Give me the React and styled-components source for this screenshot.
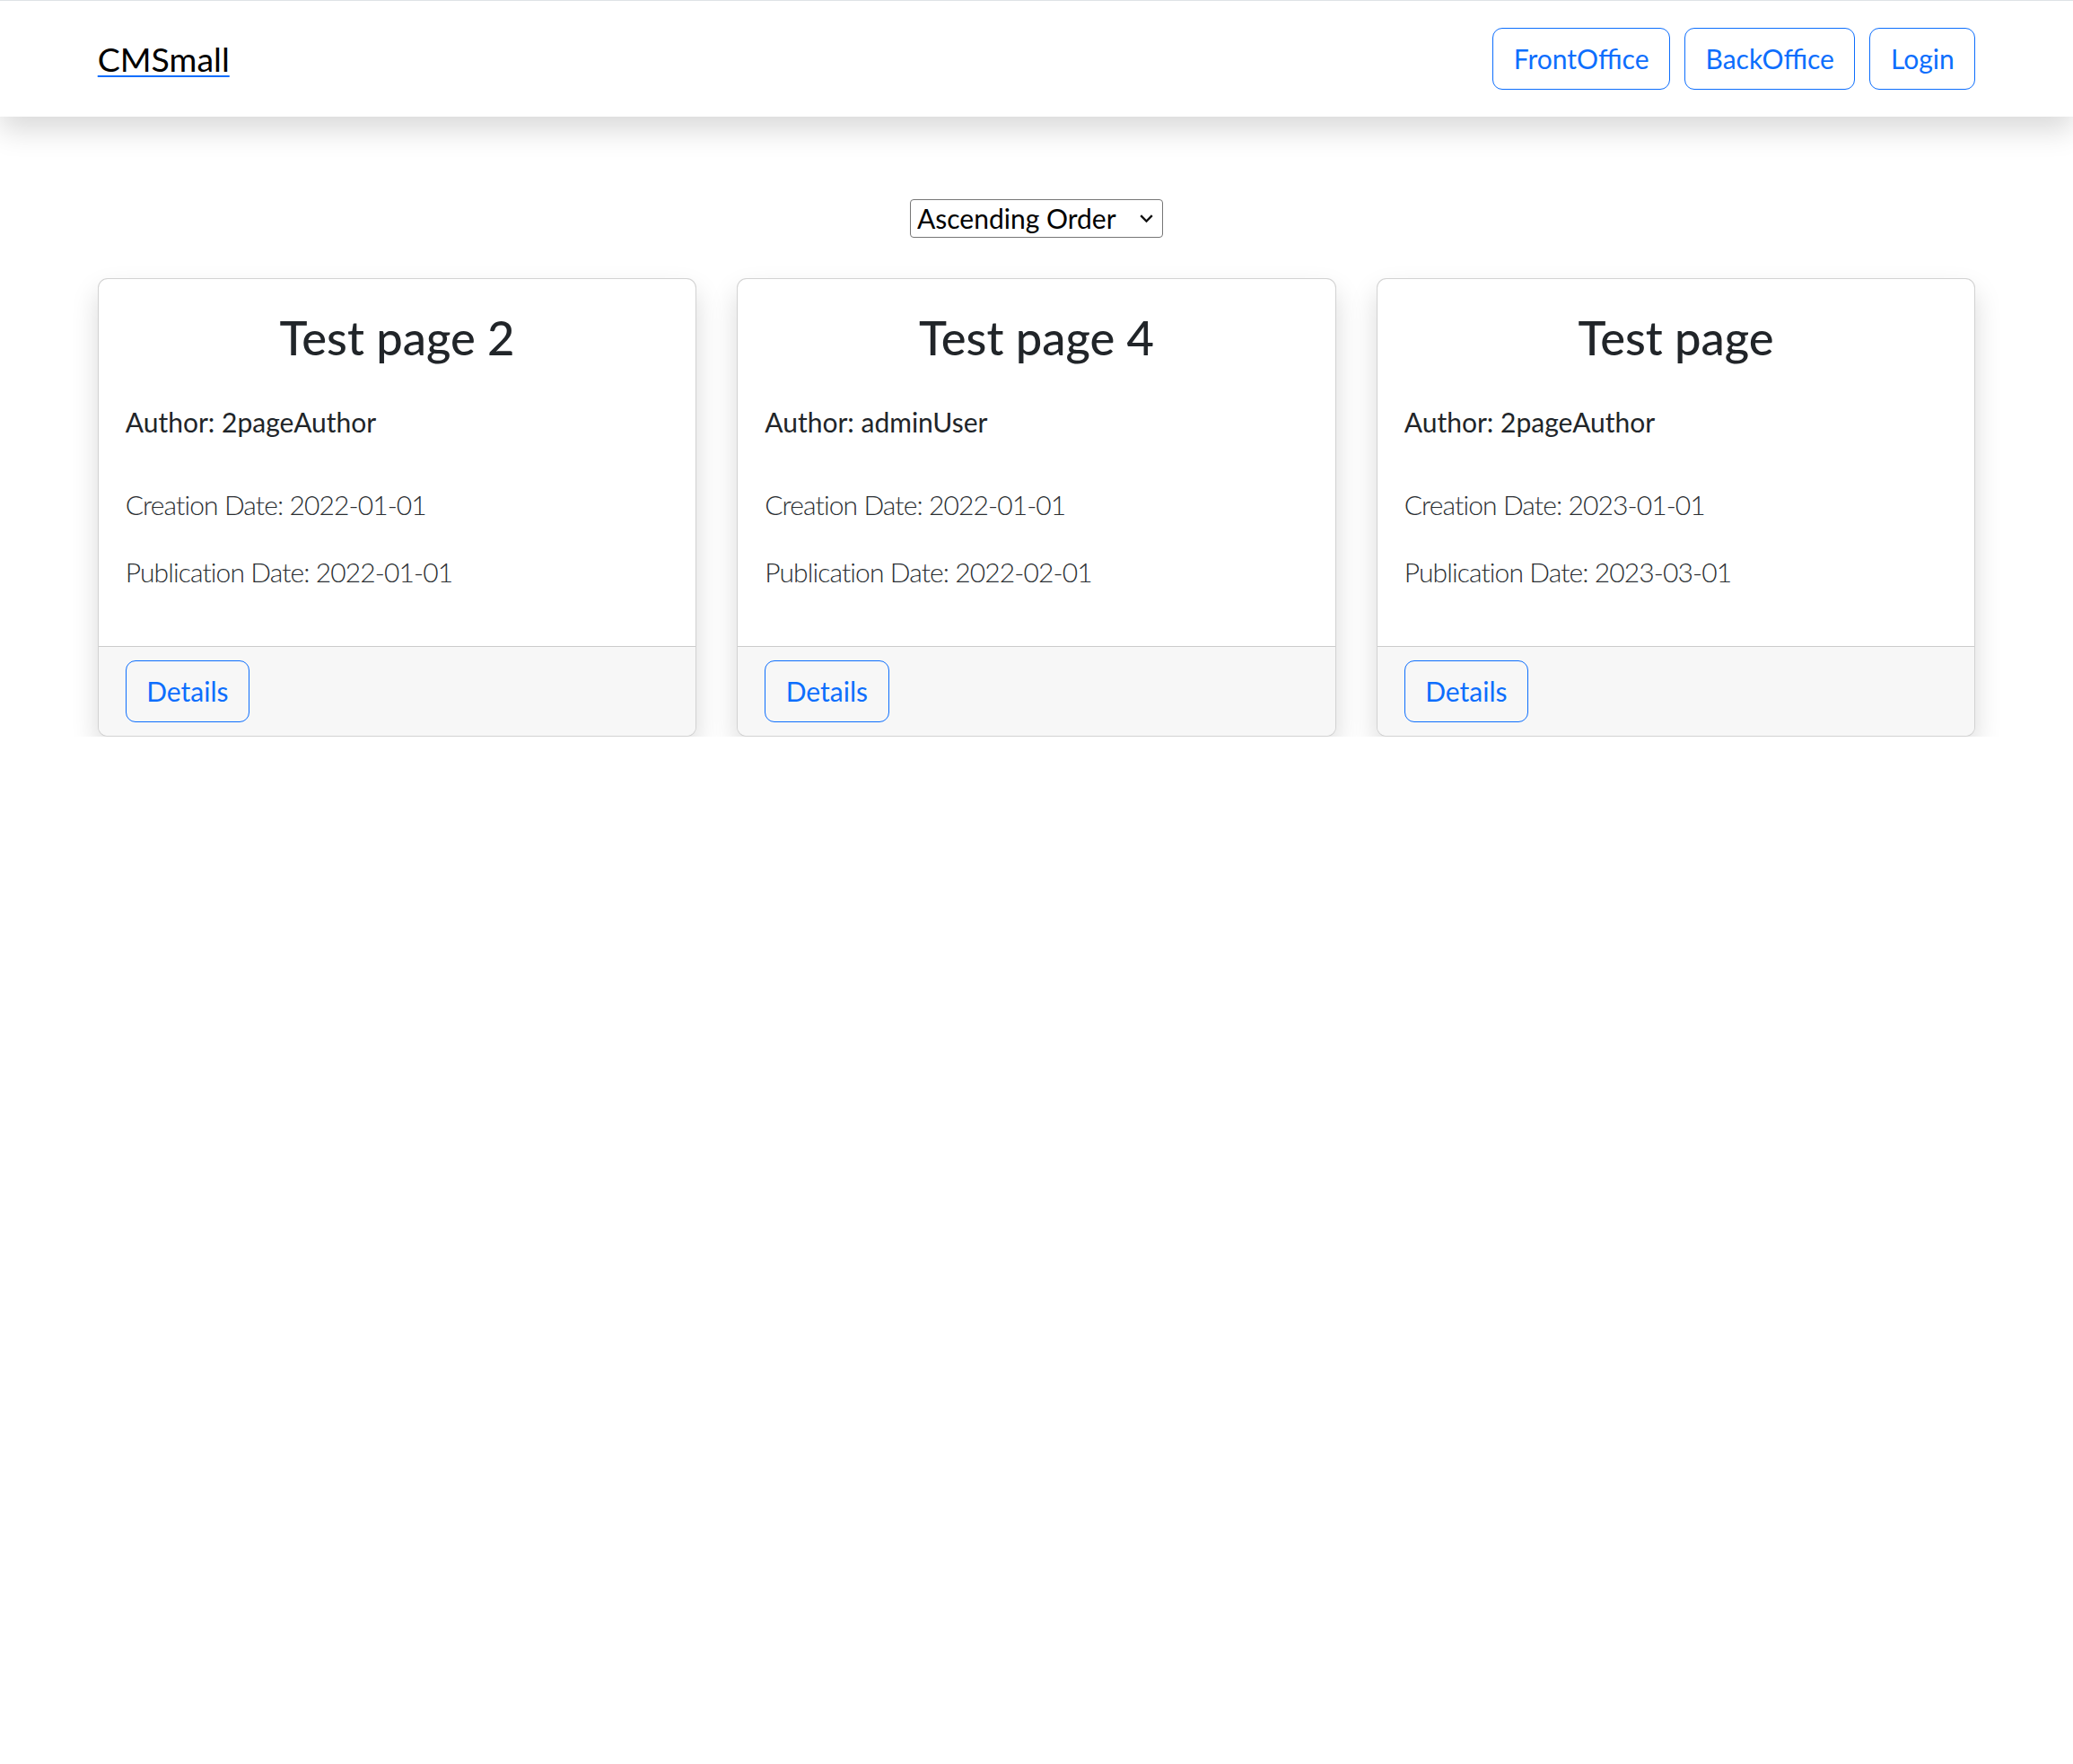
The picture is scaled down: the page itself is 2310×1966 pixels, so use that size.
import React, { useState } from "react";
import styled, { createGlobalStyle } from "styled-components";

const pages = [
  { id: 2, title: "Test page 2", author: "2pageAuthor", created: "2022-01-01", published: "2022-01-01" },
  { id: 4, title: "Test page 4", author: "adminUser", created: "2022-01-01", published: "2022-02-01" },
  { id: 1, title: "Test page", author: "2pageAuthor", created: "2023-01-01", published: "2023-03-01" },
];

function App() {
  const [order, setOrder] = useState("asc");

  return (
    <>
      <GlobalStyle />
      <Navbar>
        <Container>
          <Brand href="#">CMSmall</Brand>
          <NavButtons>
            <OutlineButton>FrontOffice</OutlineButton>
            <OutlineButton>BackOffice</OutlineButton>
            <OutlineButton>Login</OutlineButton>
          </NavButtons>
        </Container>
      </Navbar>

      <Main>
        <SortRow>
          <SelectWrap>
            <OrderSelect value={order} onChange={(e) => setOrder(e.target.value)}>
              <option value="asc">Ascending Order</option>
              <option value="desc">Descending Order</option>
            </OrderSelect>
            <Chevron width="15" height="9" viewBox="0 0 15 9">
              <path d="M1.2 1.2l6.3 6.3 6.3-6.3" fill="none" stroke="#111" strokeWidth="2.4" />
            </Chevron>
          </SelectWrap>
        </SortRow>

        <CardGrid>
          {pages.map((page) => (
            <Card key={page.id}>
              <CardBody>
                <CardTitle>{page.title}</CardTitle>
                <Author>Author: {page.author}</Author>
                <DateLine $first>Creation Date: {page.created}</DateLine>
                <DateLine>Publication Date: {page.published}</DateLine>
              </CardBody>
              <CardFooter>
                <OutlineButton>Details</OutlineButton>
              </CardFooter>
            </Card>
          ))}
        </CardGrid>
      </Main>
    </>
  );
}

export default App;

const GlobalStyle = createGlobalStyle`
  * {
    box-sizing: border-box;
  }
  body {
    margin: 0;
    background: #fff;
    color: #212529;
    font-family: "Lato", "Liberation Sans", sans-serif;
    font-size: 30px;
    line-height: 45px;
  }
`;

const Navbar = styled.nav`
  position: relative;
  z-index: 2;
  border-top: 1px solid #dee2e6;
  background: #fff;
  padding: 30px 0;
  box-shadow: 0 15px 30px rgba(0, 0, 0, 0.15);
`;

const Container = styled.div`
  max-width: 2137.5px;
  margin: 0 auto;
  padding: 0 22.5px;
  display: flex;
  align-items: center;
  justify-content: space-between;
`;

const Brand = styled.a`
  font-size: 37.5px;
  line-height: 56px;
  color: #000;
  text-decoration: underline;
  text-decoration-color: #0d6efd;
  text-underline-offset: 4px;
  text-decoration-thickness: 2px;
`;

const NavButtons = styled.div`
  display: flex;
  gap: 16px;
`;

const OutlineButton = styled.button`
  font-family: inherit;
  font-size: 30px;
  line-height: 45px;
  padding: 11px 22.5px;
  color: #0d6efd;
  background: transparent;
  border: 1px solid #0d6efd;
  border-radius: 11px;
  cursor: pointer;
`;

const Main = styled.main`
  max-width: 2137.5px;
  margin: 0 auto;
  padding: 91px 22.5px 0;
`;

const SortRow = styled.div`
  display: flex;
  justify-content: center;
`;

const SelectWrap = styled.div`
  position: relative;
  width: 282px;
  height: 43px;
`;

const OrderSelect = styled.select`
  appearance: none;
  width: 100%;
  height: 100%;
  padding: 0 40px 0 7px;
  font-family: inherit;
  font-size: 30px;
  color: #000;
  background: #fff;
  border: 1px solid #767676;
  border-radius: 4px;
`;

const Chevron = styled.svg`
  position: absolute;
  right: 11px;
  top: 18px;
  pointer-events: none;
`;

const CardGrid = styled.div`
  display: grid;
  grid-template-columns: repeat(3, 1fr);
  gap: 45px;
  margin-top: 46px;
`;

const Card = styled.div`
  background: #fff;
  border: 1px solid rgba(0, 0, 0, 0.175);
  border-radius: 11px;
  overflow: hidden;
  box-shadow: 0 15px 30px rgba(0, 0, 0, 0.15);
`;

const CardBody = styled.div`
  padding: 33px 30px 30px;
`;

const CardTitle = styled.h3`
  margin: 0 0 15px;
  font-size: 52.5px;
  line-height: 63px;
  font-weight: 500;
  text-align: center;
  color: #212529;
`;

const Author = styled.p`
  margin: 41px 0 0;
`;

const DateLine = styled.p`
  margin: ${({ $first }) => ($first ? "47px" : "0")} 0 30px;
  font-weight: 300;
  letter-spacing: -0.9px;
  color: #2b2f33;
`;

const CardFooter = styled.div`
  padding: 15px 30px;
  background: #f7f7f7;
  border-top: 1px solid rgba(0, 0, 0, 0.175);
`;
